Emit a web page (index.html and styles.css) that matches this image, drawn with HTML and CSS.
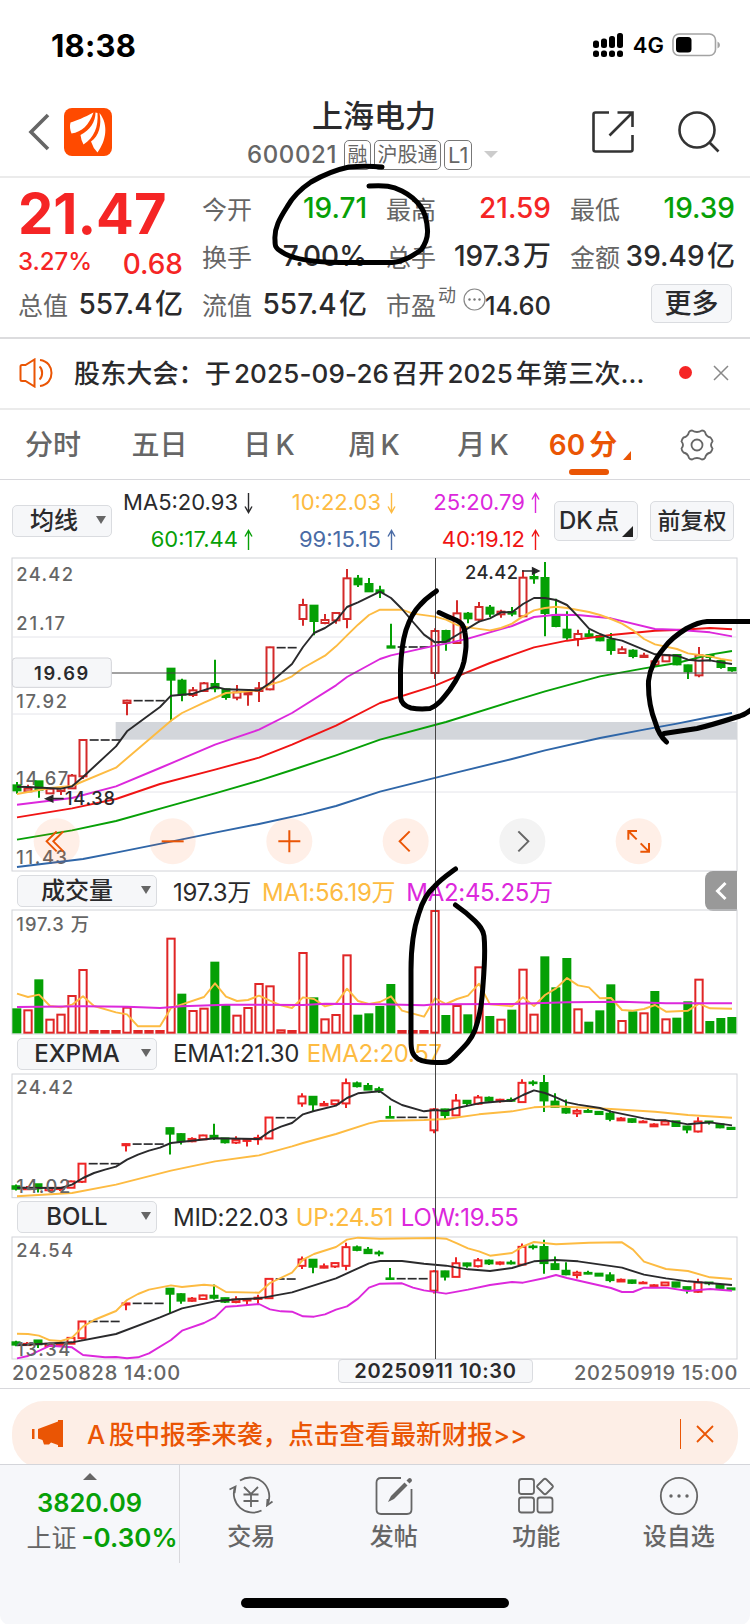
FILE: index.html
```html
<!DOCTYPE html>
<html lang="zh-CN">
  <head>
    <meta charset="UTF-8" />
    <meta name="viewport" content="width=device-width, initial-scale=1.0" />
    <title>上海电力 600021</title>
    <link rel="stylesheet" href="styles.css">
  </head>
  <body>
    <svg class="defs">
      <symbol id="up" viewBox="0 0 9 22"><path d="M4.500 21V1.500M1 7.500L4.500 1.500L8 7.500" /></symbol>
      <symbol id="down" viewBox="0 0 9 22"><path d="M4.500 1V20.500M1 14.500L4.500 20.500L8 14.500" /></symbol>
    </svg>

    <div class="screen">
      <!-- Status Bar -->
      <div class="status">
        <span class="time">18:38</span>
        <svg class="signal" width="31" height="24" viewBox="0 0 31 24">
          <rect x="0" y="7.500" width="6" height="7.500" rx="2.500" />
          <rect x="8" y="5.500" width="6" height="9.500" rx="2.500" />
          <rect x="16" y="3" width="6" height="12" rx="2.500" />
          <rect x="24" y="0" width="6" height="15" rx="2.500" />
          <rect x="0" y="17.500" width="6" height="6.500" rx="2.500" />
          <rect x="8" y="17.500" width="6" height="6.500" rx="2.500" />
          <rect x="16" y="17.500" width="6" height="6.500" rx="2.500" />
          <rect x="24" y="17.500" width="6" height="6.500" rx="2.500" />
        </svg>
        <span class="network">4G</span>
        <svg class="battery" width="49" height="24" viewBox="0 0 49 24">
          <rect x="1" y="1" width="42.500" height="21.500" rx="6" fill="#fff" stroke="#a3a3a3" stroke-width="1.600" />
          <rect x="4" y="4" width="15.500" height="15.500" rx="3.500" />
          <path d="M45.500 8.500q2.500 1 2.500 3.500t-2.500 3.500z" fill="#a3a3a3" />
        </svg>
      </div>

      <!-- Header -->
      <div class="header">
        <svg class="back" width="22" height="38" viewBox="0 0 22 38">
          <path d="M20 2L3 19L20 36" fill="none" stroke="#666" stroke-width="3.600" />
        </svg>
        <svg class="logo" width="48" height="48" viewBox="0 0 48 48">
          <rect width="48" height="48" rx="8" fill="#ff4a00" />
          <path d="M29.500 4.500C20 9.500 13 12.500 6.500 14.500C5.500 18 6 22 7.500 25.500C18 24 25 17 29.500 4.500Z" fill="#fff" />
          <path d="M31.500 4.500C31.500 14 26 22 16.500 27Q17 32 19.500 36.500C30 30 34.500 19 33.500 5Z" fill="#fff" />
          <path d="M35.500 5C38 17 35 28 27 33.500Q29 40 33.500 44.500C42 33 45 17 35.500 5Z" fill="#fff" />
        </svg>
        <div class="title">
          <h1>上海电力</h1>
          <div class="code">
            <span class="num">600021</span>
            <span class="tag">融</span>
            <span class="tag">沪股通</span>
            <span class="tag">L1</span>
            <i class="caret light"></i>
          </div>
        </div>
        <svg class="share" width="42" height="42" viewBox="0 0 42 42">
          <path d="M17 1.500H3.500Q1.500 1.500 1.500 3.500V38.500Q1.500 40.500 3.500 40.500H38.500Q40.500 40.500 40.500 38.500V24M25.500 1.500H40.500V16M40.500 1.500L17.500 24.500" />
        </svg>
        <svg class="search" width="42" height="42" viewBox="0 0 42 42">
          <circle cx="19" cy="19" r="17.500" />
          <path d="M31.500 31.500L40.500 40.500" />
        </svg>
      </div>

      <!-- Quote -->
      <div class="quote">
        <div class="price red">21.47</div>
        <div class="cell open"><label>今开</label><b class="green">19.71</b></div>
        <div class="cell"><label>最高</label><b class="red">21.59</b></div>
        <div class="cell"><label>最低</label><b class="green">19.39</b></div>
        <div class="cell change red"><span>3.27%</span><b>0.68</b></div>
        <div class="cell"><label>换手</label><b>7.00%</b></div>
        <div class="cell"><label>总手</label><b>197.3 万</b></div>
        <div class="cell"><label>金额</label><b>39.49 亿</b></div>
        <div class="cell"><label>总值</label><b>557.4 亿</b></div>
        <div class="cell"><label>流值</label><b>557.4 亿</b></div>
        <div class="cell pe">
          <label>市盈<sup>动</sup></label>
          <svg width="23" height="23" viewBox="0 0 23 23">
            <circle cx="11.500" cy="11.500" r="10.500" fill="none" stroke="#888" stroke-width="1.200" />
            <circle cx="6.500" cy="11.500" r="1.200" /><circle cx="11.500" cy="11.500" r="1.200" /><circle cx="16.500" cy="11.500" r="1.200" />
          </svg>
          <b>14.60</b>
        </div>
        <div class="more-cell"><button class="more">更多</button></div>
      </div>

      <!-- Notice -->
      <div class="notice">
        <svg width="34" height="30" viewBox="0 0 34 30">
          <path d="M1.500 8.500Q1.500 7 3 7H6.500L15.500 1.500V28.500L6.500 23H3Q1.500 23 1.500 21.500ZM20.500 8.500C24 11 24 19 20.500 21.500M21 2C29 3 32.500 9 32.500 15S29 27 21 28" />
        </svg>
        <p>股东大会：于<span>2025-09-26</span>召开<span>2025</span>年第三次...</p>
        <i class="dot"></i>
        <svg class="close" width="16" height="16" viewBox="0 0 16 16"><path d="M1 1L15 15M15 1L1 15" /></svg>
      </div>

      <!-- Period Tabs -->
      <div class="tabs">
        <span>分时</span>
        <span>五日</span>
        <span>日 K</span>
        <span>周 K</span>
        <span>月 K</span>
        <span class="active">60 分</span>
        <svg width="34" height="32" viewBox="0 0 34 32">
          <path d="M12 1.500Q17 4.500 22 1.500Q24 1.500 25 3Q26 7.500 30.500 8.500Q32.500 11 32.500 12.500Q29.500 16 32.500 19.500Q32 22 30.500 23.500Q26 24.500 25 29Q24 30.500 22 30.500Q17 27.500 12 30.500Q10 30.500 9 29Q8 24.500 3.500 23.500Q1.500 21 1.500 19.500Q4.500 16 1.500 12.500Q2 10 3.500 8.500Q8 7.500 9 3Q10 1.500 12 1.500Z" />
          <circle cx="17" cy="16" r="5.500" />
        </svg>
      </div>

      <!-- Moving Averages -->
      <div class="ma-bar">
        <button class="select small">均线<i class="caret"></i></button>
        <div class="ma-values">
          <span>MA5:20.93<svg><use href="#down" /></svg></span>
          <span class="yellow">10:22.03<svg><use href="#down" /></svg></span>
          <span class="magenta">25:20.79<svg><use href="#up" /></svg></span>
          <span class="green">60:17.44<svg><use href="#up" /></svg></span>
          <span class="blue">99:15.15<svg><use href="#up" /></svg></span>
          <span class="bright-red">40:19.12<svg><use href="#up" /></svg></span>
        </div>
        <button class="square dk">DK 点</button>
        <button class="square">前复权</button>
      </div>

      <!-- Charts, filled in by chart.js -->
      <div class="charts">
        <svg id="main" class="chart" width="725" height="313" viewBox="0 25 2175 939"></svg>

        <div class="chart-head wide">
          <button class="select">成交量<i class="caret"></i></button>
          <span class="v1">197.3万</span>
          <span class="v2 yellow">MA1:56.19万</span>
          <span class="v3 magenta">MA2:45.25万</span>
          <div class="side-tab">
            <svg width="12" height="20" viewBox="0 0 12 20"><path d="M10.500 2L2.500 10L10.500 18" /></svg>
          </div>
        </div>
        <svg id="volume" class="chart" width="725" height="124" viewBox="0 121 2175 372"></svg>

        <div class="chart-head">
          <button class="select">EXPMA<i class="caret"></i></button>
          <span class="v1">EMA1:21.30</span>
          <span class="v2 yellow">EMA2:20.57</span>
        </div>
        <svg id="expma" class="chart" width="725" height="124" viewBox="0 41 2175 372"></svg>

        <div class="chart-head">
          <button class="select">BOLL<i class="caret"></i></button>
          <span class="v1">MID:22.03</span>
          <span class="v2 yellow">UP:24.51</span>
          <span class="v3 magenta">LOW:19.55</span>
        </div>
        <svg id="boll" class="chart" width="725" height="122" viewBox="0 529 2175 366"></svg>
        <div class="crosshair"></div>
      </div>
      <div class="dates">
        <span>20250828 14:00</span>
        <b>20250911 10:30</b>
        <span>20250919 15:00</span>
      </div>

      <!-- Banner -->
      <div class="banner-wrap">
        <div class="banner">
          <svg class="horn" width="31" height="27" viewBox="0 0 31 27">
            <path d="M0 9H2.500V19H0ZM6 9L26 1.500V0H31V27H26V25L19 22.500L17 24.500H12L10.500 20L6 18.500Z" />
          </svg>
          <p>A 股中报季来袭，点击查看最新财报&gt;&gt;</p>
          <i class="line"></i>
          <svg class="close" width="18" height="18" viewBox="0 0 18 18"><path d="M1 1L17 17M17 1L1 17" /></svg>
        </div>
      </div>

      <!-- Bottom Nav -->
      <div class="nav">
        <div class="index">
          <i class="caret up"></i>
          <b class="green">3820.09</b>
          <div>上证<b class="green">-0.30%</b></div>
        </div>
        <div class="item">
          <svg width="46" height="42" viewBox="0 0 46 42">
            <path d="M12 5.500A19 19 0 0 1 39.500 29.500M33.500 35.500A19 19 0 0 1 7 12M1.500 14.500L7.500 11.500L6.500 18M44.500 26.500L39 30.500L39.500 24" />
            <path d="M16 12L23 19L30 12M15.500 19.500H30.500M15.500 26H30.500M23 19V32" />
          </svg>
          <span>交易</span>
        </div>
        <div class="item">
          <svg width="40" height="42" viewBox="0 0 40 42">
            <path d="M27 3H7Q2.500 3 2.500 7.500V34.500Q2.500 39 7 39H33Q37.500 39 37.500 34.500V14" />
            <path d="M14 27L17 21L30.500 7.500L33.500 10.500L20 24Z" class="solid" />
            <path d="M32.500 5.500L34.500 3.500Q36 2.500 37.500 4Q38.500 5.500 37.500 6.500L35.500 8.500Z" class="solid" />
          </svg>
          <span>发帖</span>
        </div>
        <div class="item">
          <svg width="38" height="42" viewBox="0 0 38 42">
            <rect x="2" y="4" width="15" height="15" rx="2.500" />
            <rect x="2" y="22.500" width="15" height="15" rx="2.500" />
            <rect x="20.500" y="22.500" width="15" height="15" rx="2.500" />
            <path d="M26.500 4.500Q28 3 29.500 4.500L35.500 10.500Q36.500 11.500 35.500 12.500L29.500 18.500Q28 20 26.500 18.500L20.500 12.500Q19.500 11.500 20.500 10.500Z" />
          </svg>
          <span>功能</span>
        </div>
        <div class="item">
          <svg width="40" height="42" viewBox="0 0 40 42">
            <circle cx="20" cy="21" r="18.200" />
            <circle cx="12" cy="21" r="1.700" class="solid" /><circle cx="20" cy="21" r="1.700" class="solid" /><circle cx="28" cy="21" r="1.700" class="solid" />
          </svg>
          <span>设自选</span>
        </div>
      </div>

      <!-- Pen marks over the screen -->
      <svg class="marks" width="750" height="1624" viewBox="0 0 750 1624">
        <path d="M382 167C370 166 360 166 349 167C335 170 323 175 311 182C299 190 292 198 287 207C280 218 274 228 275 240C275 246 275 248 282 252C290 258 310 262 340 262.500L392 262.500C403 262 412 256 421 250C426 243 428 238 427.500 230C427 220 425 213 421 207C416 200 410 195 402 191C392 186 385 185 369 186" />
        <path d="M436.500 591C430 596 426 598 420 605C413 612 409 621 406 630C402 643 401 655 400.500 670V697C401 702 404 706 411 708Q420 709.500 430 708.500C437 706 442 700 450 689.500C458 678 462 671 464 661.500C466 650 467 643 465 633C464 624 460 622 456 620Q448 617 439 612.500" />
        <path d="M752 621.500H707C699 622 693 625 686.500 628.500C676 635 669 641 664 648C655 659 650 668 648.500 681C648 697 650 709 655.500 723C658 732 661 737 666.500 742" />
        <path d="M664 733.500L697 728.500C712 725 727 720 740 716Q746 714 752 709" />
        <path d="M455.500 869C446 876 440 880 434 887C426 894 422 903 419 913C413 930 411 950 411 970V1040C411 1050 412 1055 418 1059Q426 1063 440 1062.500C449 1063 450 1061 456 1055C466 1045 471 1040 475 1030C481 1012 482 1000 483 985C485 960 485 945 484 936C483 929 479 925 475 921Q467 913 455.500 905" />
      </svg>
    </div>

    <script src="chart.js"></script>
  </body>
</html>
```

FILE: styles.css
```css
/* Basic Styles */
* {
  box-sizing: border-box;
}

body {
  margin: 0;
  background-color: #fff;
  font-family: Inter, "Noto Sans CJK SC", sans-serif;
  color: #2a2a2c;
}

h1,
p,
button {
  margin: 0;
  padding: 0;
  font: inherit;
}

b,
i {
  font-style: normal;
  font-weight: 500;
}

svg {
  flex: none;
  display: block;
}

.defs {
  position: absolute;
  width: 0;
  height: 0;
}

.screen {
  position: relative;
  width: 750px;
  height: 1624px;
  overflow: hidden;
}

.red { color: #f52525; }
.bright-red { color: #f01414; }
.green { color: #07a007; }
.yellow { color: #fdbb42; }
.magenta { color: #dc28dc; }
.blue { color: #4a6ba5; }

.caret {
  border: 5px solid transparent;
  border-top: 8px solid #666;
  border-bottom: 0;
}

.caret.light {
  border-width: 7px 7px 0;
  border-top-color: #ccc;
}

.caret.up {
  border-width: 0 7px 7px;
  border-bottom: 7px solid #666;
}

/* Status Bar */
.status {
  height: 90px;
  display: flex;
  align-items: center;
  padding: 0 29px 0 51px;
}

.time {
  font-size: 31px;
  font-weight: 700;
  color: #000;
  flex: 1;
  letter-spacing: 0.2px;
}

.network {
  font-size: 22px;
  font-weight: 600;
  color: #000;
  margin: 0 8px 0 9px;
}

/* Header */
.header {
  height: 88px;
  display: flex;
  align-items: center;
  padding: 0 30px 3px 28px;
  border-bottom: 2px solid #ebebeb;
}

.logo {
  margin-left: 14px;
}

.title {
  flex: 1;
  padding: 4px 0 0 135px;
}

.title h1 {
  padding-left: 65px;
  font-size: 31px;
  line-height: 42px;
  font-weight: 500;
}

.code {
  display: flex;
  align-items: center;
  height: 36px;
  color: #666;
}

.code .num {
  width: 97px;
  font-size: 24px;
  font-weight: 500;
  letter-spacing: 0.6px;
}

.tag {
  height: 30px;
  margin-right: 3px;
  padding: 0 2.5px;
  border: 1px solid #777;
  border-radius: 5px;
  font-size: 20px;
  line-height: 28px;
}

.tag:nth-child(4) {
  padding: 0 3px;
  font-size: 22px;
}

.code .caret {
  margin-left: 9px;
}

.share,
.search {
  fill: none;
  stroke: #333;
  stroke-width: 2.6;
}

.share {
  margin-right: 44px;
}

/* Quote */
.quote {
  height: 161px;
  display: grid;
  grid-template-columns: repeat(4, 165px);
  grid-template-rows: repeat(3, 48px);
  column-gap: 19px;
  padding: 5.5px 0 0 18px;
  border-bottom: 2px solid #dcdcde;
}

.price {
  font-size: 56px;
  font-weight: 700;
  line-height: 60px;
}

.cell {
  display: flex;
  align-items: center;
  justify-content: space-between;
  white-space: nowrap;
  word-spacing: -5px;
}

.cell label {
  font-size: 25px;
  color: #666;
}

.cell b {
  font-size: 28px;
  line-height: 40px;
}

.change {
  padding-top: 16px;
}

.change span {
  font-size: 24px;
  padding-bottom: 4px;
  font-weight: 500;
}

.pe svg {
  margin: -8px -5px 0 4px;
  fill: #777;
}

.cell.pe b {
  padding-top: 4px;
  font-size: 25.5px;
}

.pe sup {
  font-size: 18px;
  line-height: 0;
  vertical-align: 13px;
  margin-left: 2px;
}

.more-cell {
  display: flex;
  align-items: center;
  justify-content: flex-end;
}

button {
  border: 1.5px solid #dadce0;
  border-radius: 5px;
  background-color: #f6f7f9;
  color: #2a2a2c;
  font-weight: 500;
}

.more {
  width: 81px;
  height: 39px;
  margin: -1px 3px 0 0;
  font-size: 27px;
  line-height: 35px;
}

/* Notice */
.notice {
  height: 71px;
  display: flex;
  align-items: center;
  padding: 0 21px 2px 19px;
  border-bottom: 2px solid #ebebeb;
}

.notice svg {
  fill: none;
  stroke: #ea5504;
  stroke-width: 2;
}

.notice p {
  flex: 1;
  padding: 0 0 2px 21px;
  font-size: 26px;
  font-weight: 500;
  letter-spacing: 0.15px;
  white-space: nowrap;
}

.notice p span {
  margin: 0 3px;
}

.dot {
  width: 13px;
  height: 13px;
  border-radius: 7px;
  background-color: #f52525;
  margin-right: 21px;
}

.notice .close {
  stroke: #888;
  stroke-width: 1.5;
}

/* Period Tabs */
.tabs {
  height: 70px;
  display: grid;
  grid-template-columns: 106px 107px 112px 98px 120px 80px 1fr;
  align-items: center;
  text-align: center;
  font-size: 28px;
  color: #666;
  font-weight: 500;
  border-bottom: 1.5px solid #d8d8dc;
  white-space: nowrap;
  word-spacing: -3px;
}

.tabs span {
  line-height: 68px;
}

.tabs .active {
  position: relative;
  color: #ea5504;
  font-weight: 600;
}

.tabs .active::before {
  content: "";
  position: absolute;
  left: 26px;
  top: 58px;
  width: 40px;
  height: 6px;
  border-radius: 3px;
  background-color: #ea5504;
}

.tabs .active::after {
  content: "";
  position: absolute;
  right: -8px;
  top: 40px;
  border-left: 8px solid transparent;
  border-bottom: 9px solid #ea5504;
}

.tabs svg {
  margin-left: 57px;
  fill: none;
  stroke: #666;
  stroke-width: 1.8;
}

/* Moving Averages */
.ma-bar {
  height: 78px;
  display: flex;
  align-items: center;
  padding: 4px 0 0 12px;
}

.select {
  width: 140px;
  height: 32px;
  display: flex;
  align-items: center;
  justify-content: center;
  position: relative;
  padding-right: 19px;
  font-size: 24px;
  line-height: 28px;
}

.select .caret {
  position: absolute;
  right: 5px;
  top: 10px;
}

.select.small {
  width: 100px;
  padding-right: 16px;
}

.ma-values {
  width: 429px;
  height: 74px;
  display: grid;
  grid-template-columns: 142px 143px 144px;
  grid-template-rows: 37px 37px;
  margin-right: 13px;
  font-size: 22px;
}

.ma-values span {
  display: flex;
  align-items: center;
  justify-content: flex-end;
  line-height: 37px;
}

.ma-values svg {
  width: 11px;
  height: 22px;
  margin-left: 5px;
  fill: none;
  stroke: currentColor;
  stroke-width: 1.4;
}

.square {
  width: 84px;
  height: 40px;
  margin-right: 12px;
  font-size: 23px;
  line-height: 36px;
  white-space: nowrap;
  word-spacing: -4px;
}

.dk {
  position: relative;
  text-align: left;
  padding-left: 4px;
  font-size: 24px;
}

.dk::after {
  content: "";
  position: absolute;
  right: 4px;
  bottom: 3px;
  border-left: 11px solid transparent;
  border-bottom: 11px solid #222;
}

/* Charts */
.charts {
  position: relative;
  width: 725px;
  margin-left: 12px;
}

.chart {
  overflow: visible;
}

.chart text {
  font-size: 55px;
  font-weight: 500;
  fill: #666;
}

.chart .dark {
  fill: #2a2a2c;
}

.chart .bold {
  font-weight: 600;
}

.chart-head {
  height: 39.3px;
  display: flex;
  align-items: center;
  padding-left: 4.5px;
  font-size: 24px;
  letter-spacing: -0.3px;
  white-space: nowrap;
}

.chart-head .select {
  letter-spacing: 0;
}

.chart-head .v1 {
  margin-left: 16.5px;
}

.chart-head .v2,
.chart-head .v3 {
  margin-left: 7.5px;
}

.chart-head.wide .v2,
.chart-head.wide .v3 {
  margin-left: 11px;
}

.side-tab {
  width: 32px;
  height: 40px;
  margin-left: auto;
  display: flex;
  align-items: center;
  justify-content: center;
  border-radius: 8px 0 0 8px;
  background-color: #999;
}

.side-tab path {
  fill: none;
  stroke: #fff;
  stroke-width: 3;
}

.crosshair {
  position: absolute;
  left: 423px;
  top: 0;
  width: 1px;
  height: 100%;
  background-color: #444;
}

.dates {
  height: 30px;
  display: flex;
  padding: 0 12px;
  border-bottom: 1.5px solid #d8d8dc;
  font-size: 20px;
  line-height: 28px;
  letter-spacing: 0.7px;
  color: #666;
  font-weight: 500;
}

.dates span:first-child {
  width: 326px;
}

.dates span:last-child {
  margin-left: auto;
}

.dates b {
  width: 195px;
  height: 24px;
  line-height: 23px;
  text-align: center;
  border: 1.5px solid #dadce0;
  border-radius: 4px;
  background-color: #f6f7f9;
  color: #2a2a2c;
  font-weight: 600;
}

/* Banner */
.banner-wrap {
  height: 75px;
  padding: 12px 12px 0;
  overflow: hidden;
}

.banner {
  height: 68px;
  display: flex;
  align-items: center;
  padding: 0 24px 2px 20px;
  border-radius: 32px;
  background-color: #fdeee6;
  color: #ea5504;
  fill: #ea5504;
}

.banner p {
  flex: 1;
  padding: 0 0 2px 24px;
  font-size: 25.6px;
  font-weight: 500;
  word-spacing: -3px;
}

.banner .line {
  width: 1px;
  height: 30px;
  margin-right: 15px;
  background-color: #ea5504;
}

.banner .close {
  stroke: #ea5504;
  stroke-width: 1.8;
}

/* Bottom Nav */
.nav {
  height: 161px;
  display: grid;
  grid-template-columns: 180px repeat(4, 142.5px);
  align-items: start;
  border-top: 1.5px solid #d4d5da;
  border-radius: 0 0 10px 10px;
  background-color: #f6f7fa;
}

.index {
  height: 98px;
  display: flex;
  flex-direction: column;
  align-items: center;
  padding-top: 8px;
  border-right: 1.5px solid #d8d8dc;
  font-size: 25px;
  color: #666;
  white-space: nowrap;
}

.index > b {
  line-height: 36px;
  margin-top: 5px;
  font-size: 25.5px;
  font-weight: 600;
}

.index div {
  line-height: 34px;
  padding-left: 25px;
}

.index div b {
  margin-left: 5px;
  font-size: 26px;
  font-weight: 600;
}

.item {
  display: flex;
  flex-direction: column;
  align-items: center;
  padding-top: 10px;
  font-size: 24px;
  font-weight: 500;
  color: #666;
}

.item svg {
  fill: none;
  stroke: #666;
  stroke-width: 1.8;
}

.item .solid {
  fill: #666;
  stroke: none;
}

.item span {
  line-height: 40px;
}

.screen::after {
  content: "";
  position: absolute;
  left: 241px;
  bottom: 16px;
  width: 268px;
  height: 10px;
  border-radius: 5px;
  background-color: #000;
}

/* Pen marks */
.marks {
  position: absolute;
  left: 0;
  top: 0;
  fill: none;
  stroke: #000;
  stroke-width: 5;
  stroke-linecap: round;
}
```

FILE: chart.js
```js
// Charts are drawn at 3 units per pixel, one candle every 33 units
const RED = '#d42a2a'
const GREEN = '#05a005'

const x = (i) => 15 + 33 * i

// type, high, body top, body bottom, low (type d = flat limit bar)
const candles = [
  ['g', 697, 707, 722, 732], ['r', 705, 717, 725, 728], ['g', 695, 695, 720, 744],
  ['r', 715, 717, 731, 731], ['r', 712, 716, 724, 736], ['r', 673, 678, 716, 716],
  ['r', 570, 571, 680, 688], ['d', 571], ['d', 571], ['d', 571],
  ['r', 450, 453, 460, 497], ['d', 453], ['d', 453], ['d', 453],
  ['g', 355, 357, 390, 515], ['g', 387, 393, 435, 455], ['r', 412, 422, 436, 442],
  ['r', 397, 401, 424, 424], ['g', 330, 403, 416, 428], ['g', 417, 419, 442, 450],
  ['r', 406, 428, 444, 452], ['r', 426, 428, 434, 468], ['r', 397, 416, 424, 457],
  ['r', 291, 293, 419, 422], ['d', 294], ['d', 294],
  ['r', 147, 166, 208, 228], ['g', 167, 168, 214, 257], ['r', 193, 211, 220, 224],
  ['r', 188, 190, 212, 222], ['r', 58, 86, 208, 236], ['g', 76, 87, 104, 112],
  ['g', 85, 103, 125, 125], ['g', 108, 122, 127, 145], ['g', 222, 290, 294, 294],
  ['d', 292], ['d', 292], ['d', 292],
  ['r', 236, 244, 370, 388], ['g', 240, 244, 278, 303], ['r', 152, 191, 280, 280],
  ['g', 187, 192, 206, 221], ['r', 157, 172, 210, 218], ['g', 166, 174, 192, 202],
  ['r', 180, 186, 194, 204], ['g', 172, 187, 192, 200], ['r', 62, 84, 200, 200],
  ['g', 68, 82, 86, 102], ['g', 37, 85, 190, 260], ['g', 147, 197, 229, 233],
  ['g', 185, 240, 263, 270], ['r', 240, 253, 268, 290], ['g', 240, 254, 259, 263],
  ['g', 255, 259, 272, 275], ['g', 250, 270, 301, 315], ['r', 290, 299, 310, 312],
  ['g', 299, 303, 319, 326], ['r', 309, 318, 322, 324], ['r', 328, 335, 346, 350],
  ['r', 316, 317, 335, 335], ['g', 316, 316, 344, 347], ['g', 345, 347, 365, 388],
  ['r', 292, 317, 377, 383], ['g', 316, 317, 322, 335], ['g', 330, 334, 352, 357],
  ['g', 352, 355, 362, 366],
]

const volumes = [
  418, 422, 331, 450, 435, 379, 301, 484, 484, 484, 414, 484, 484, 484, 207, 374, 424,
  417, 278, 408, 438, 415, 343, 350, 482, 484, 250, 385, 449, 436, 257, 437, 433, 411,
  345, 484, 484, 484, 124, 438, 409, 436, 293, 441, 450, 422, 300, 435, 262, 355, 267,
  419, 458, 424, 346, 454, 427, 431, 366, 449, 446, 397, 330, 456, 447, 444,
]

// Up/down of a volume bar, where it differs from its candle
const volumeTypes = { 14: 'r', 47: 'r', 58: 'g' }

// Lines as "index,y" points
const mainLines = {
  '#2f66a8': '0,952 6,928 9,909 14,876 18,849 22,823 26,794 29,769 33,726 40,668 45,628 48,602 53,565 57,540 60,522 63,502 65,490',
  '#07a007': '0,870 5,842 9,814 14,768 18,731 22,693 25,661 29,617 33,570 39,517 45,455 48,425 53,380 57,356 60,340 63,315 65,304',
  '#f01414': '0,803 5,776 9,748 13,703 18,660 22,624 25,585 29,528 33,460 38,408 40,380 43,340 47,293 50,273 54,256 58,243 60,241 63,235 65,239',
  '#dc28dc': '0,765 5,745 9,710 13,655 18,585 22,540 25,490 29,407 30,382 33,328 34,317 38,288 39,282 41,267 45,229 47,202 49,195 51,196 54,206 58,238 60,240 63,248 65,260',
  '#fdbb42': '0,733 3,715 5,709 9,654 14,513 15,490 17,459 19,430 20,428 22,422 23,405 24,395 25,380 26,355 28,318 29,290 30,257 31,225 32,196 33,180 35,180 36,192 38,201 39,210 40,226 41,233 43,242 44,235 45,222 46,200 47,182 48,175 49,171 50,175 52,187 53,196 54,208 55,222 56,242 57,268 58,284 60,298 61,311 62,316 63,320 64,328 65,333',
  '#2a2a2c': '0,711 1,712 4,717 5,710 6,682 9,590 10,545 13,472 14,438 16,432 18,411 19,419 22,422 23,400 25,343 26,292 27,250 28,235 29,213 30,172 31,158 33,126 34,145 35,178 36,217 37,255 38,278 39,276 40,256 42,216 43,206 44,188 45,188 46,163 47,145 48,145 49,151 50,166 51,200 52,237 53,253 54,266 55,273 58,314 60,318 61,330 62,333 63,332 64,338 65,343',
}

const volumeLines = {
  '#fdbb42': '0,372 1,382 2,375 3,409 4,413 5,405 6,380 7,409 9,428 10,434 11,470 13,470 14,415 15,404 17,382 18,341 19,381 20,394 21,391 22,378 23,393 24,407 25,415 26,383 27,388 28,410 29,402 30,357 31,394 32,403 33,397 34,380 35,423 37,441 38,386 39,403 40,388 41,378 42,342 43,404 45,410 46,383 47,409 48,376 49,356 50,325 51,347 52,353 53,386 54,385 55,421 56,423 57,418 58,406 59,426 61,423 62,402 63,416 65,417',
  '#dc28dc': '0,412 6,410 10,411 13,415 15,410 19,405 26,406 28,402 33,404 37,407 38,404 45,403 50,398 55,396 59,401 65,401',
}

const expmaLines = {
  '#fdbb42': '0,408 5,398 9,373 14,331 18,303 22,285 25,258 26,248 29,221 32,189 33,182 37,179 39,176 42,162 45,153 47,141 49,138 54,146 58,154 61,164 65,172',
  '#2a2a2c': '0,382 4,383 5,373 6,353 7,338 8,328 9,319 10,298 11,283 12,271 13,262 14,248 18,234 22,236 23,213 24,199 25,188 26,162 27,152 29,136 30,113 31,99 33,93 34,117 35,134 37,153 38,149 39,152 40,143 42,129 44,123 45,121 46,104 47,90 48,98 49,111 50,126 51,133 53,143 54,154 57,174 58,179 59,180 61,192 63,186 65,195',
}

const bollLines = {
  '#fdbb42': '0,819 1,820 2,825 3,839 4,841 5,831 6,798 7,778 9,751 10,718 11,700 12,687 14,674 15,679 17,672 18,675 19,694 22,696 23,667 25,636 26,597 27,580 29,559 30,537 31,531 33,534 38,532 39,534 40,548 41,563 42,572 43,585 45,577 46,557 47,544 49,551 52,546 55,545 56,567 57,603 59,625 61,631 63,650 65,655',
  '#2a2a2c': '0,854 5,845 9,820 13,770 15,743 18,722 20,716 22,713 25,695 29,653 30,638 32,608 33,601 35,601 37,609 39,615 41,626 43,631 45,622 47,602 49,598 51,602 55,621 57,642 59,653 61,662 65,673',
  '#dc28dc': '0,893 1,886 3,855 5,860 6,883 8,890 9,889 10,893 11,890 12,878 14,838 15,810 17,787 18,770 19,738 20,736 22,730 23,746 24,752 25,753 26,767 27,768 28,761 29,747 30,737 31,714 32,681 33,669 35,668 36,681 37,689 39,699 41,687 43,673 45,664 46,666 48,652 49,643 50,652 54,682 55,694 56,694 57,681 59,681 61,691 63,685 65,690',
}

function drawCandles(map, red, dx) {
  return candles
    .map(([type, ...v], i) => {
      const [high, top, bottom, low] = v.map(map)
      const cx = x(i) + dx
      if (type === 'd') {
        return `<path d="M${cx - 13} ${high}h27" stroke="#2a2a2c" stroke-width="5" />`
      }
      const color = type === 'g' ? GREEN : red
      const fill = type === 'g' ? GREEN : '#fff'
      const h = Math.max(bottom - top, 1)
      return `<path d="M${cx} ${high}V${top}M${cx} ${bottom}V${low}" stroke="${color}" stroke-width="6" />
        <rect x="${cx - 10.5}" y="${top}" width="21" height="${h}" fill="${fill}" stroke="${color}" stroke-width="6" />`
    })
    .join('')
}

function drawVolumes() {
  return volumes
    .map((top, i) => {
      if ((volumeTypes[i] || candles[i][0]) === 'g') {
        return `<rect x="${x(i) - 14}" y="${top - 2}" width="27" height="${493 - top}" fill="${GREEN}" />`
      }
      return `<rect x="${x(i) - 11}" y="${top}" width="22" height="${489 - top}" fill="#fff" stroke="#e02626" stroke-width="6" />`
    })
    .join('')
}

function drawLines(lines) {
  return Object.entries(lines)
    .map(([color, points]) => {
      const pts = points
        .split(' ')
        .map((p) => p.split(','))
        .map(([i, y]) => `${x(+i)},${y}`)
        .join(' ')
      return `<polyline points="${pts}" fill="none" stroke="${color}" stroke-width="5.8" stroke-linejoin="round" />`
    })
    .join('')
}

const frame = (y, h) =>
  `<rect x="0" y="${y}" width="2175" height="${h}" fill="none" stroke="#d2d3d8" stroke-width="3" />`

const label = (text, lx, y, length, cls = '') =>
  `<text x="${lx}" y="${y}" textLength="${length}" class="${cls}">${text}</text>`

const grid = [262, 493, 727]
  .map((y) => `<path d="M0 ${y}H2175" stroke="#e4e4ea" stroke-width="3" />`)
  .join('')

// Round buttons over the main chart
const buttons = [
  [134, 'M0 -30L-30 0L0 30M20 -30L-10 0L20 30'],
  [482, 'M-33 0H33'],
  [832, 'M-33 0H33M0 -33V33'],
  [1181, 'M12 -30L-18 0L12 30'],
  [1531, 'M-12 -30L18 0L-12 30'],
  [1880, 'M-31 -5V-31H-5M-31 -31L-6 -6M31 5V31H5M31 31L6 6'],
]
  .map(([cx, d], i) => {
    const gray = i === 4
    return `<g transform="translate(${cx} 875)">
      <circle r="69" fill="${gray ? '#f3f3f3' : 'rgba(255, 98, 20, 0.1)'}" />
      <path d="${d}" fill="none" stroke="${gray ? '#666' : '#ea5504'}" stroke-width="6" />
    </g>`
  })
  .join('')

document.getElementById('main').innerHTML =
  frame(25, 939) + grid +
  '<rect x="311" y="517" width="1864" height="53" fill="#d3d6db" />' +
  label('24.42', 13, 94, 170) + label('21.17', 13, 241, 146) +
  label('17.92', 13, 474, 152) + label('14.67', 13, 706, 156) +
  label('11.43', 13, 942, 152) +
  drawCandles((v) => v, RED, 0) + drawLines(mainLines) +
  label('14.38', 159, 767, 150, 'dark') +
  '<path d="M102 747H155M122 738L102 747L122 756Z" stroke="#2a2a2c" stroke-width="5" />' +
  label('24.42', 1359, 87, 159, 'dark') +
  '<path d="M1530 64H1580M1562 55L1580 64L1562 73Z" stroke="#2a2a2c" stroke-width="5" />' +
  '<path d="M298 370H2175" stroke="#444" stroke-width="3" />' +
  '<rect x="1" y="325" width="297" height="88" rx="10" fill="#f6f7f9" stroke="#d2d3d8" stroke-width="3" />' +
  label('19.69', 66, 390, 163, 'dark bold') + buttons

document.getElementById('volume').innerHTML =
  frame(121, 372) + label('197.3 万', 13, 183, 218) + drawVolumes() + drawLines(volumeLines)

document.getElementById('expma').innerHTML =
  frame(41, 371) + label('24.42', 13, 102, 170) +
  drawCandles((v) => 68 + (v - 85) * 0.498, '#ee2525', -3) +
  drawLines(expmaLines) + label('14.02', 13, 398, 162)

document.getElementById('boll').innerHTML =
  frame(529, 366) + label('24.54', 13, 590, 170) +
  drawCandles((v) => 559 + (v - 85) * 0.4597, '#ee2525', -3) +
  drawLines(bollLines) + label('13.34', 13, 886, 162)
```
